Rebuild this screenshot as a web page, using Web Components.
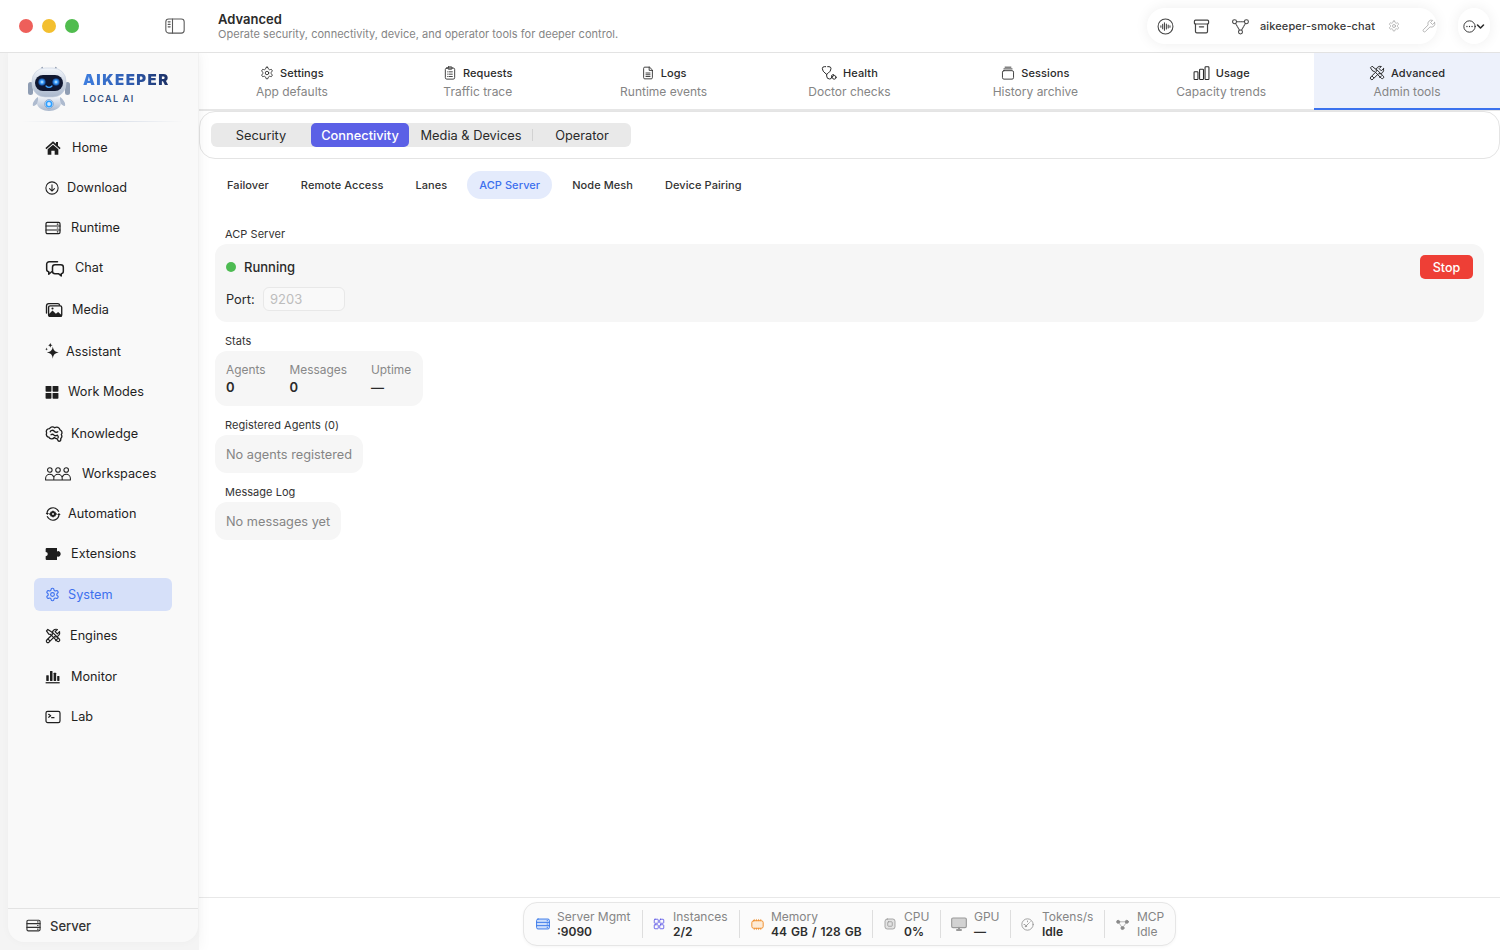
<!doctype html>
<html lang="en"><head><meta charset="utf-8"><title>Advanced</title>
<style>
html,body{margin:0;height:100%;overflow:hidden}
body{font-family:Inter,"Liberation Sans",sans-serif;color:#262626;background:#fff}
</style></head><body>

<app-shell>
  <top-bar slot="top" heading="Advanced" sub="Operate security, connectivity, device, and operator tools for deeper control."></top-bar>
  <side-bar slot="side">
    <nav-item label="Home" icon="home" iw="16" tx="27"></nav-item>
    <nav-item label="Download" icon="download" iw="14" tx="22"></nav-item>
    <nav-item label="Runtime" icon="runtime" iw="16" tx="26"></nav-item>
    <nav-item label="Chat" icon="chat" iw="20" tx="30"></nav-item>
    <nav-item label="Media" icon="media" iw="18" tx="27" style="--mt:9px"></nav-item>
    <nav-item label="Assistant" icon="spark" iw="15" tx="21" style="--mt:9px"></nav-item>
    <nav-item label="Work Modes" icon="grid" iw="14" tx="23"></nav-item>
    <nav-item label="Knowledge" icon="brain" iw="18" tx="26" style="--mt:9px"></nav-item>
    <nav-item label="Workspaces" icon="people" iw="26" ih="14" vb="0 0 26 14" sw="1.050" tx="37"></nav-item>
    <nav-item label="Automation" icon="auto" iw="16" tx="23"></nav-item>
    <nav-item label="Extensions" icon="puzzle" iw="16" tx="26"></nav-item>
    <nav-item label="System" icon="gear" iw="15" tx="23" active style="--mt:8px"></nav-item>
    <nav-item label="Engines" icon="tools" iw="16" tx="25" style="--mt:8px"></nav-item>
    <nav-item label="Monitor" icon="bars" iw="15" tx="26" style="--mt:8px"></nav-item>
    <nav-item label="Lab" icon="term" iw="16" tx="26"></nav-item>
  </side-bar>
  <main-tabs slot="main">
    <tab-item icon="gear" iw="14" label="Settings" sub="App defaults"></tab-item>
    <tab-item icon="clip" iw="14" label="Requests" sub="Traffic trace"></tab-item>
    <tab-item icon="doc" iw="14" label="Logs" sub="Runtime events"></tab-item>
    <tab-item icon="steth" iw="16" label="Health" sub="Doctor checks"></tab-item>
    <tab-item icon="sessions" iw="14" label="Sessions" sub="History archive"></tab-item>
    <tab-item icon="usage" iw="17" label="Usage" sub="Capacity trends"></tab-item>
    <tab-item icon="tools" iw="16" label="Advanced" sub="Admin tools" active></tab-item>
  </main-tabs>
  <seg-bar slot="main">
    <seg-item w="100">Security</seg-item>
    <seg-item w="98" active>Connectivity</seg-item>
    <seg-item w="124" sep>Media &amp; Devices</seg-item>
    <seg-item w="98">Operator</seg-item>
  </seg-bar>
  <sub-tabs slot="main">
    <sub-tab>Failover</sub-tab>
    <sub-tab>Remote Access</sub-tab>
    <sub-tab>Lanes</sub-tab>
    <sub-tab active>ACP Server</sub-tab>
    <sub-tab>Node Mesh</sub-tab>
    <sub-tab>Device Pairing</sub-tab>
  </sub-tabs>
  <page-content slot="main">
    <info-section heading="ACP Server" wide><server-card></server-card></info-section>
    <info-section heading="Stats">
      <stats-card>
        <stat-col label="Agents" value="0"></stat-col>
        <stat-col label="Messages" value="0"></stat-col>
        <stat-col label="Uptime" value="—"></stat-col>
      </stats-card>
    </info-section>
    <info-section heading="Registered Agents (0)"><empty-note>No agents registered</empty-note></info-section>
    <info-section heading="Message Log"><empty-note>No messages yet</empty-note></info-section>
  </page-content>
  <status-bar slot="main">
    <status-item icon="serverblue" label="Server Mgmt" value=":9090" iw="14" box="21" pad="0" w="106"></status-item>
    <status-item icon="gridline" label="Instances" value="2/2" iw="12" box="20" pad="10" w="97" sep></status-item>
    <status-item icon="chip" label="Memory" value="44 GB / 128 GB" iw="13" box="20" pad="11" w="133" sep></status-item>
    <status-item icon="cpu" label="CPU" value="0%" iw="12" box="20" pad="11" w="68" sep></status-item>
    <status-item icon="display" label="GPU" value="—" iw="16" box="23" pad="10" w="70" sep></status-item>
    <status-item icon="gauge" label="Tokens/s" value="Idle" iw="13" box="21" pad="10" w="94" sep></status-item>
    <status-item icon="nodesg" label="MCP" value="Idle" iw="13" box="21" pad="11" w="71" sep muted></status-item>
  </status-bar>
</app-shell>

<script>
const G='M12.22 2h-.44a2 2 0 0 0-2 2v.18a2 2 0 0 1-1 1.73l-.43.25a2 2 0 0 1-2 0l-.15-.08a2 2 0 0 0-2.73.73l-.22.38a2 2 0 0 0 .73 2.73l.15.1a2 2 0 0 1 1 1.72v.51a2 2 0 0 1-1 1.74l-.15.09a2 2 0 0 0-.73 2.73l.22.38a2 2 0 0 0 2.73.73l.15-.08a2 2 0 0 1 2 0l.43.25a2 2 0 0 1 1 1.73V20a2 2 0 0 0 2 2h.44a2 2 0 0 0 2-2v-.18a2 2 0 0 1 1-1.73l.43-.25a2 2 0 0 1 2 0l.15.08a2 2 0 0 0 2.73-.73l.22-.39a2 2 0 0 0-.73-2.73l-.15-.08a2 2 0 0 1-1-1.74v-.5a2 2 0 0 1 1-1.74l.15-.09a2 2 0 0 0 .73-2.73l-.22-.38a2 2 0 0 0-2.73-.73l-.15.08a2 2 0 0 1-2 0l-.43-.25a2 2 0 0 1-1-1.73V4a2 2 0 0 0-2-2z';
const ICONS={
 home:'<path fill="currentColor" stroke="none" d="M12 2 .6 12l1.500 1.700L12 5.100l9.900 8.600 1.500-1.700-3.900-3.400V3h-3v2.800z"/><path fill="currentColor" stroke="none" d="M12 7.200 4 14v8h5.500v-6h5v6H20v-8z"/>',
 download:'<circle cx="12" cy="12" r="10.500"/><path d="M12 6.500v10.500M7.800 13l4.200 4.200 4.200-4.200"/>',
 runtime:'<rect x="1.500" y="3.500" width="21" height="17" rx="2"/><path d="M1.500 9h21M1.500 15h21M18.500 6.200h.8M18.500 12h.8M18.500 17.800h.8"/>',
 chat:'<path d="M15 4.500H5A3 3 0 0 0 2 7.500v6a3 3 0 0 0 2.500 3v3l3.500-3"/><path d="M15.500 8h3.500a3 3 0 0 1 3 3v5a3 3 0 0 1-2.500 3v2.500l-3-2.500h-4.500a3 3 0 0 1-3-3v-5a3 3 0 0 1 3-3z"/>',
 media:'<path d="M2 16V6.500a3 3 0 0 1 3-3h12a2.500 2.500 0 0 1 2.500 2"/><rect x="4.800" y="6.500" width="17.500" height="14" rx="2"/><path fill="currentColor" stroke="none" d="M5 20.500v-3l5-5 4.500 4.500 3-2.500 4.500 4v2z"/><circle cx="10" cy="10" r="1.400" fill="currentColor" stroke="none"/>',
 spark:'<path fill="currentColor" stroke="none" d="M12.500 4c1 6.200 2.800 8.200 9.500 9.500-6.700 1.300-8.500 3.300-9.500 10-1-6.700-2.800-8.700-9.500-10 6.700-1.300 8.500-3.300 9.500-9.500zM8.500-2c.5 2.700 1.300 3.500 3.800 4-2.500.5-3.300 1.300-3.800 4-.5-2.700-1.300-3.500-3.800-4 2.500-.5 3.300-1.300 3.800-4zM2.500 5.500c.3 1.800.8 2.300 2.500 2.600-1.700.3-2.200.8-2.500 2.600-.3-1.800-.8-2.300-2.500-2.600 1.700-.3 2.200-.8 2.500-2.600z"/>',
 grid:'<g fill="currentColor" stroke="none"><rect x="1" y="1.500" width="10" height="10" rx="1.200"/><rect x="13" y="1.500" width="10" height="10" rx="1.200"/><rect x="1" y="13.500" width="10" height="10" rx="1.200"/><rect x="13" y="13.500" width="10" height="10" rx="1.200"/></g>',
 brain:'<path d="M5.500 16.500A4 4 0 0 1 2.200 10.700 4 4 0 0 1 6 4.800 4.500 4.500 0 0 1 13 3.700a4.500 4.500 0 0 1 7 2.800 4 4 0 0 1 1.700 6.400 3.500 3.500 0 0 1-.7 5.100v1.800a2 2 0 0 1-3.500 1.200l-1.500-2.800a4 4 0 0 1-3.500-1.500 4.500 4.500 0 0 1-7.500-.5z"/><path d="M7 9a3 3 0 0 1 5-1M12 8c1.500 2 4 2 5 1M8 13c1.500-1 3-.5 4 .5s3 1 4.500 0M16.500 13.500c1 1 1.500 2 1 3.500"/>',
 people:'<circle cx="4.800" cy="3" r="2.300"/><circle cx="13" cy="3" r="2.300"/><circle cx="21.200" cy="3" r="2.300"/><path d="M.6 13v-1.500a4.200 4.200 0 0 1 4.200-4.200c1.800 0 3.300 1.100 3.900 2.700M8.800 13v-1.500a4.200 4.200 0 0 1 8.400 0V13M17.300 10c.6-1.600 2.100-2.700 3.900-2.700a4.200 4.200 0 0 1 4.200 4.200V13M.6 13h24.800"/>',
 auto:'<circle cx="12" cy="12" r="2.600" stroke-width="2.400"/><path d="M12 7.800l1 1.500 1.800-.3.6 1.800 1.600 1.200-1.600 1.200-.6 1.800-1.800-.3-1 1.500-1-1.500-1.800.3-.6-1.800L7 12l1.600-1.200.6-1.800 1.800.3z"/><path d="M3 11a9 9 0 0 1 15.500-5.500L20.500 8M21 13a9 9 0 0 1-15.500 5.500L3.500 16"/><path fill="currentColor" stroke="none" d="M1 10.500h5l-2.500 3zM18 13.500h5.500l-2.500-3z"/>',
 puzzle:'<path fill="currentColor" stroke="none" d="M2.500 3h15.500v5.500a2.300 2.300 0 0 1 3-.6c1.300.8 2.500 2.300 2.500 4s-1.200 3.200-2.500 4a2.300 2.300 0 0 1-3-.6V21H2.500a1.500 1.500 0 0 1-1.500-1.500v-4.200a2.800 2.800 0 0 0 0-6.300V4.500A1.500 1.500 0 0 1 2.500 3z"/>',
 gear:`<path d="${G}"/><circle cx="12" cy="12" r="3"/>`,
 tools:'<path d="M4.200 2.200 2.200 4.200l3.500 5 2.500.3L18.500 20a2.300 2.300 0 0 0 3.200-3.200L11.200 6.600 9.500 5.700z"/><path d="M16 19l3-3"/><path d="M21.800 5.500l-3.300 3.300-3.300-3.300 3.300-3.300a6 6 0 0 0-7.500 7.500L2.700 18a2.400 2.400 0 0 0 0 3.300 2.400 2.400 0 0 0 3.300 0l8.300-8.300a6 6 0 0 0 7.500-7.500z"/><path d="M5 17l2 2"/>',
 bars:'<g fill="currentColor" stroke="none"><rect x="2" y="10" width="4" height="9" rx=".6"/><rect x="8" y="3" width="4" height="16" rx=".6"/><rect x="13.800" y="6" width="4" height="13" rx=".6"/><rect x="19.500" y="11" width="3.600" height="8" rx=".6"/><rect x="1" y="21" width="22.500" height="2"/></g>',
 term:'<rect x="1.500" y="3.500" width="21" height="17" rx="2.500"/><path d="M5.500 8l3 2.200-3 2.200M10 13h3.500"/>',
 clip:'<rect x="4" y="3.500" width="16" height="19" rx="2.500"/><rect x="8.500" y="1.500" width="7" height="4" rx="1"/><path d="M8 10h.8M11 10h5M8 14h.8M11 14h5M8 18h.8M11 18h5"/>',
 doc:'<path d="M14 2H6.500A2 2 0 0 0 4.500 4v16a2 2 0 0 0 2 2h11a2 2 0 0 0 2-2V7.500z"/><path d="M14 2v5.500h5.500M8.500 12h7M8.500 15h7M8.500 18h7"/>',
 steth:'<path d="M7 2.500H5a3 3 0 0 0-3 3 9 9 0 0 0 4 6.500l2.500 2 2.500-2a9 9 0 0 0 4-6.500 3 3 0 0 0-3-3h-2"/><path d="M8.500 14v2.500a4.500 4.500 0 0 0 4.500 4.500 3 3 0 0 0 3-3v-2.500a3 3 0 0 1 3-1"/><circle cx="19.800" cy="18.500" r="2.800"/>',
 sessions:'<rect x="2.500" y="8" width="19" height="14.500" rx="2.500"/><path d="M5 5h14M7 2h10"/>',
 usage:'<rect x="1.500" y="9.500" width="5.500" height="11" rx="1"/><rect x="9.300" y="6" width="5.500" height="14.500" rx="1"/><rect x="17" y="2.500" width="5.500" height="18" rx="1"/>',
 wave:'<circle cx="12" cy="12" r="10.500"/><path d="M5.500 11v2M8 9v6M10.500 6.800v10.400M13.200 8.500v7M15.800 9.800v4.400M18.300 11v2" stroke-width="1.500"/>',
 archive:'<rect x="2" y="3" width="20" height="5.500" rx="1.500"/><path d="M3.500 8.500V19a2 2 0 0 0 2 2h13a2 2 0 0 0 2-2V8.500M9 12.500h6"/>',
 nodes:'<circle cx="4.500" cy="6" r="2.500"/><circle cx="19.500" cy="6" r="2.500"/><circle cx="12" cy="19" r="2.500"/><path d="M7.500 6h9M5.800 8.300l5 8.300M18.200 8.300l-5 8.300" stroke-dasharray="1.500 1"/>',
 wrench:'<path d="M21.800 6l-3.800 3.500-3.400-3.400 3.700-3.700a6 6 0 0 0-7.800 7.800L2.300 18.500a2.300 2.300 0 0 0 3.200 3.200l8.300-8.200A6 6 0 0 0 21.800 6z"/>',
 dots:'<circle cx="12" cy="12" r="10.500"/><path d="M7.300 12h.01M12 12h.01M16.700 12h.01" stroke-width="2.400" stroke-linecap="round"/>',
 chev:'<path d="M4 8l8 8 8-8" stroke-width="4.200" stroke-linecap="round"/>',
 sidebar:'<rect x="1" y="3.500" width="22" height="17" rx="3.500"/><path d="M9 3.500v17"/><path d="M3.800 7h2.400M3.800 10h2.400M3.800 13h2.400" stroke-width="1.400"/>',
 serverblue:'<rect x="1" y="3.500" width="22" height="17" rx="2.500" fill="#cfdffb"/><path d="M1 9.200h22M1 14.800h22M19 6.300h.8M19 12h.8M19 17.700h.8"/>',
 gridline:'<rect x="2.500" y="2.500" width="8" height="8" rx="1.500"/><rect x="13.500" y="2.500" width="8" height="8" rx="1.500"/><rect x="2.500" y="13.500" width="8" height="8" rx="1.500"/><rect x="13.500" y="13.500" width="8" height="8" rx="1.500"/>',
 chip:'<rect x="1.500" y="5" width="21" height="14" rx="3.500" fill="#fdebd6"/><path d="M6 2.500V5M10 2.500V5M14 2.500V5M18 2.500V5M6 19v2.500M10 19v2.500M14 19v2.500M18 19v2.500" stroke-width="1.200"/>',
 cpu:'<rect x="2" y="2" width="20" height="20" rx="4.500" fill="#e3e3e3"/><rect x="7.500" y="7.500" width="9" height="9" rx="1.500"/>',
 display:'<rect x="1" y="3" width="22" height="14.500" rx="2" fill="#d2d2d2"/><path d="M9 21h6M12 17.500V21" stroke-width="3"/>',
 gauge:'<circle cx="12" cy="12" r="10.500"/><path d="M8 16l6-6M5.500 12h1.500M12 5.500V7M17 7l-1 1"/><circle cx="9" cy="15" r="1.300" fill="currentColor"/>',
 nodesg:'<circle cx="4" cy="7" r="2.800" fill="currentColor"/><circle cx="20" cy="7" r="2.800" fill="currentColor"/><circle cx="12" cy="18.500" r="2.800" fill="currentColor"/><path d="M4 7h16M4 7l8 11.500L20 7" stroke-width="1.100"/>'
};
const def=(name,css,html,extra={})=>{
  const t=document.createElement('template');
  t.innerHTML=`<style>${css}</style>${html}`;
  customElements.define(name,class extends HTMLElement{
    constructor(){super();this.attachShadow({mode:'open'}).appendChild(t.content.cloneNode(true))}
    connectedCallback(){extra.init&&extra.init.call(this,this.shadowRoot)}
  });
};
customElements.define('ui-icon',class extends HTMLElement{
  constructor(){super();this.attachShadow({mode:'open'})}
  connectedCallback(){
    const w=this.getAttribute('w')||14,h=this.getAttribute('h')||w,n=this.getAttribute('name');
    this.shadowRoot.innerHTML=`<style>:host{display:inline-flex;flex:none;line-height:0}svg{display:block;overflow:visible}</style>
    <svg width="${w}" height="${h}" viewBox="${this.getAttribute('vb')||'0 0 24 24'}" fill="none" stroke="currentColor" stroke-width="${this.getAttribute('sw')||1.8}" stroke-linecap="round" stroke-linejoin="round" aria-hidden="true">${ICONS[n]||''}</svg>`;
  }
});
const mkIcon=(name,w,sw,h,vb)=>{const i=document.createElement('ui-icon');i.setAttribute('name',name);i.setAttribute('w',w);if(sw)i.setAttribute('sw',sw);if(h)i.setAttribute('h',h);if(vb)i.setAttribute('vb',vb);return i};

def('app-shell',`:host{display:grid;grid-template-rows:53px 1fr;grid-template-columns:199px 1fr;height:950px;width:1500px;overflow:hidden;background:#fff}
  .top{grid-column:1/3}
  .side{background:#f4f4f4;padding:0 1px 8px 8px;min-height:0;display:flex;position:relative;z-index:1;box-shadow:0 0 14px rgba(0,0,0,.05);clip-path:inset(0 -20px 0 0)}
  .main{display:flex;flex-direction:column;min-width:0;min-height:0}`,
  `<div class="top"><slot name="top"></slot></div><div class="side"><slot name="side"></slot></div><div class="main"><slot name="main"></slot></div>`);

def('top-bar',`:host{display:flex;align-items:center;height:53px;box-sizing:border-box;border-bottom:1px solid #e3e3e3;background:#fff}
  .lights{display:flex;gap:9px;padding-left:19px;width:165px;box-sizing:border-box;flex:none}
  .lights i{width:14px;height:14px;border-radius:50%;display:block}
  .tog{flex:none;width:53px;color:#5a5a5a;display:flex}
  .tt{flex:1;min-width:0}
  h1{margin:0;font-size:13px;line-height:16px;font-weight:600;color:#2a2a2a}
  p{margin:0;font-size:11px;line-height:14px;color:#858585;letter-spacing:.03px}
  .pill{display:flex;align-items:center;height:36px;background:#fff;border-radius:18px;box-shadow:0 0 14px rgba(0,0,0,.07);color:#444}
  .a{width:290px;margin-right:21px;box-sizing:border-box;padding-left:10px}
  .b{width:32px;margin-right:10px;justify-content:center;color:#2a2a2a}
  .name{font-size:11px;font-weight:500;color:#3a3a3a;margin:0 0 0 10px;width:128px;white-space:nowrap;letter-spacing:.12px}
  ui-icon.g{color:#a8a8a8}`,
  `<div class="lights"><i style="background:#ee5f5a"></i><i style="background:#f3bf2f"></i><i style="background:#50bc4e"></i></div>
   <div class="tog"><ui-icon name="sidebar" w="20" h="20" sw="1.300"></ui-icon></div>
   <div class="tt"><h1></h1><p></p></div>
   <div class="pill a"><ui-icon name="wave" w="17" sw="1.500"></ui-icon><span style="width:19px"></span><ui-icon name="archive" w="17" sw="1.700"></ui-icon><span style="width:21px"></span><ui-icon name="nodes" w="19" sw="1.300"></ui-icon><span class="name">aikeeper-smoke-chat</span><ui-icon class="g" name="gear" w="12" sw="1.600"></ui-icon><span style="width:22px"></span><ui-icon class="g" name="wrench" w="14" sw="1.400"></ui-icon></div>
   <div class="pill b"><ui-icon name="dots" w="13" sw="1.700"></ui-icon><ui-icon name="chev" w="9"></ui-icon></div>`,
  {init(r){r.querySelector('h1').textContent=this.getAttribute('heading');r.querySelector('p').textContent=this.getAttribute('sub')}});

def('side-bar',`:host{display:flex;flex-direction:column;width:190px;background:#f9f9f9;border-radius:0 0 16px 16px;box-shadow:0 0 8px rgba(0,0,0,.03);min-height:0}
  .brand{display:flex;align-items:center;height:69px;box-sizing:border-box;padding:1px 0 0 19px;gap:12px;position:relative;flex:none}
  .brand::after{content:"";position:absolute;left:14px;right:14px;bottom:0;height:1px;background:linear-gradient(90deg,transparent,#d4dbe6 50%,transparent)}
  .nm{font-size:15px;line-height:18px;font-weight:900;letter-spacing:1.450px;background:linear-gradient(90deg,#3f7fe0,#2f5cb0 55%,#1b2f63);-webkit-background-clip:text;background-clip:text;color:transparent}
  .lo{font-size:9px;line-height:12px;margin-top:4px;font-weight:600;letter-spacing:1.300px;color:#33507f}
  nav{display:flex;flex-direction:column;flex:1;padding:2px 0 0 26px;min-height:0}
  .foot{flex:none;height:33px;border-top:1px solid #e3e3e3;display:flex;align-items:center;padding-left:18px;gap:9px;font-size:13px;font-weight:500;color:#333}`,
  `<div class="brand"><svg width="44" height="46" viewBox="0 0 44 46" aria-hidden="true" style="flex:none">
     <defs><linearGradient id="m" x1="0" y1="0" x2="0" y2="1"><stop offset="0" stop-color="#f3f6fb"/><stop offset="1" stop-color="#a9b7cc"/></linearGradient>
     <radialGradient id="e"><stop offset="0" stop-color="#e4f6ff"/><stop offset=".45" stop-color="#3ea2ff"/><stop offset="1" stop-color="#0c3a86"/></radialGradient></defs>
     <path d="M15 2l1 5h12l1-5" fill="none" stroke="#8d99ad" stroke-width="1.500"/>
     <rect x="1" y="17" width="5" height="13" rx="2.500" fill="#8f9db3"/><rect x="38" y="17" width="5" height="13" rx="2.500" fill="#8f9db3"/>
     <path d="M11 32c-3 2-6 6-5 9 2 0 4-2 6-4zM33 32c3 2 6 6 5 9-2 0-4-2-6-4z" fill="#aebbcf"/>
     <path d="M12 31h20l2 8c-1 4-6 7-12 7s-11-3-12-7z" fill="url(#m)"/>
     <rect x="5" y="3" width="34" height="29" rx="13" fill="url(#m)" stroke="#c4cedd" stroke-width=".6"/>
     <rect x="8" y="10" width="28" height="16" rx="8" fill="#0f1730"/>
     <circle cx="15" cy="17" r="3.800" fill="url(#e)"/><circle cx="29" cy="17" r="3.800" fill="url(#e)"/>
     <path d="M19 21c1.500 1.800 4.500 1.800 6 0" fill="none" stroke="#3ea2ff" stroke-width="1.200" stroke-linecap="round"/>
     <circle cx="22" cy="39" r="4.400" fill="#cfe6ff" stroke="#8aa0bf" stroke-width=".8"/><circle cx="22" cy="39" r="2.700" fill="none" stroke="#2ea0ff" stroke-width="1.600"/>
   </svg><div><div class="nm">AIKEEPER</div><div class="lo">LOCAL AI</div></div></div>
   <nav><slot></slot></nav>
   <div class="foot"><ui-icon name="runtime" w="15" sw="1.800"></ui-icon><span>Server</span></div>`);

def('nav-item',`:host{display:flex;align-items:center;height:33px;margin-top:var(--mt,7px);width:138px;box-sizing:border-box;padding-left:11px;font-size:12.700px;color:#1f1f1f;border-radius:6px;flex:none}
  :host([active]){background:#d6e0f9;color:#3d70ee}
  .i{flex:none;display:flex}span{white-space:nowrap}`,
  `<div class="i"></div><span></span>`,
  {init(r){const d=r.querySelector('.i');d.style.width=this.getAttribute('tx')+'px';
    d.appendChild(mkIcon(this.getAttribute('icon'),this.getAttribute('iw'),this.getAttribute('sw'),this.getAttribute('ih'),this.getAttribute('vb')));
    r.querySelector('span').textContent=this.getAttribute('label')}});

def('main-tabs',`:host{display:grid;grid-template-columns:repeat(7,1fr);height:58px;box-sizing:border-box;border-bottom:2px solid #e6e6e6;flex:none}`,`<slot></slot>`);
def('tab-item',`:host{display:flex;flex-direction:column;align-items:center;height:56px;box-sizing:border-box;padding-top:12px}
  :host([active]){background:#edf1fb;height:57px;border-bottom:2px solid #3b72ee}
  .l{display:flex;align-items:center;gap:6px;font-size:11px;line-height:16px;font-weight:500;color:#2a2a2a;letter-spacing:.1px}
  .s{font-size:12px;line-height:15px;margin-top:3px;color:#858585;white-space:nowrap}`,
  `<div class="l"><span class="ic" style="display:flex;height:16px;align-items:center"></span><span class="tx"></span></div><div class="s"></div>`,
  {init(r){r.querySelector('.ic').appendChild(mkIcon(this.getAttribute('icon'),this.getAttribute('iw'),'1.500'));
    r.querySelector('.tx').textContent=this.getAttribute('label');r.querySelector('.s').textContent=this.getAttribute('sub')}});

def('seg-bar',`:host{display:block;flex:none;height:48px;box-sizing:border-box;border:1px solid #e4e4e4;border-radius:16px;padding:11px 11px}
  .t{display:inline-flex;height:24px;background:#e9e9e9;border-radius:6px}`,`<div class="t"><slot></slot></div>`);
def('seg-item',`:host{display:flex;align-items:center;justify-content:center;height:24px;font-size:12.800px;color:#2a2a2a;border-radius:5px;position:relative;white-space:nowrap}
  :host([active]){background:#5b60e6;color:#fff;font-weight:500}
  :host([sep])::after{content:"";position:absolute;right:0;top:6px;bottom:6px;width:1px;background:#d2d2d2}`,`<slot></slot>`,
  {init(){this.style.width=this.getAttribute('w')+'px'}});

def('sub-tabs',`:host{display:flex;gap:8px;flex:none;padding:12px 0 0 16px}`,`<slot></slot>`);
def('sub-tab',`:host{display:flex;align-items:center;height:28px;padding:0 12px;font-size:11px;font-weight:500;color:#333;border-radius:14px;white-space:nowrap;letter-spacing:.07px}
  :host([active]){background:#e4ebfc;color:#3d70ee}`,`<slot></slot>`);

def('page-content',`:host{display:flex;flex-direction:column;gap:12px;flex:1;min-height:0;padding:28px 16px 0 16px;box-sizing:border-box}`,`<slot></slot>`);
def('info-section',`:host{display:flex;flex-direction:column;align-items:flex-start}
  :host([wide]){align-items:stretch}
  h2{margin:0 0 2px 10px;font-size:11px;line-height:15px;font-weight:400;color:#333;letter-spacing:.04px}`,`<h2></h2><slot></slot>`,
  {init(r){r.querySelector('h2').textContent=this.getAttribute('heading')}});
def('server-card',`:host{display:flex;flex-direction:column;gap:8px;background:#f6f6f6;border-radius:12px;padding:11px}
  .r{display:flex;align-items:center;height:24px}
  .dot{width:10px;height:10px;border-radius:50%;background:#4dbb52;margin-right:8px}
  .st{font-size:13px;font-weight:500;color:#2a2a2a;flex:1}
  button{all:unset;display:flex;align-items:center;justify-content:center;width:53px;height:24px;background:#ee3f36;color:#fff;border-radius:5px;font-size:12.500px;font-weight:500}
  .p{font-size:12.800px;color:#2a2a2a;width:37px}
  .in{box-sizing:border-box;width:82px;height:24px;border:1px solid #e8e8e8;border-radius:6px;background:#f9f9f9;color:#bdbdbd;font-size:13px;line-height:22px;padding-left:6px}`,
  `<div class="r"><span class="dot"></span><span class="st">Running</span><button>Stop</button></div><div class="r"><span class="p">Port:</span><div class="in">9203</div></div>`);
def('stats-card',`:host{display:flex;gap:24px;height:55px;box-sizing:border-box;background:#f6f6f6;border-radius:12px;padding:10px 11px;width:208px}`,`<slot></slot>`);
def('stat-col',`:host{display:block}.a{font-size:11.900px;line-height:17px;color:#888}.b{font-size:13px;line-height:18px;font-weight:600;color:#2a2a2a}`,
  `<div class="a"></div><div class="b"></div>`,{init(r){r.querySelector('.a').textContent=this.getAttribute('label');r.querySelector('.b').textContent=this.getAttribute('value')}});
def('empty-note',`:host{display:flex;align-items:center;height:38px;padding:0 11px;background:#f6f6f6;border-radius:12px;font-size:12.750px;color:#858585}`,`<slot></slot>`);

def('status-bar',`:host{display:flex;justify-content:center;flex:none;height:53px;box-sizing:border-box;border-top:1px solid #e8e8e8;padding-top:4px}
  .p{display:flex;align-items:center;height:44px;box-sizing:border-box;background:#fbfbfb;border:1px solid #e6e6e6;border-radius:14px;padding:0 0 0 12px;width:653px;box-shadow:0 1px 3px rgba(0,0,0,.04)}`,`<div class="p"><slot></slot></div>`);
def('status-item',`:host{display:flex;align-items:center;height:28px;box-sizing:border-box;flex:none}
  :host([sep]){border-left:1px solid #dedede}
  .ic{flex:none;display:flex}
  .a{font-size:12px;line-height:15px;color:#858585;white-space:nowrap}.b{font-size:12px;line-height:15px;font-weight:600;color:#2e2e2e;white-space:nowrap;word-spacing:1px}
  :host([muted]) .b{font-weight:400;color:#858585}`,
  `<div class="ic"></div><div><div class="a"></div><div class="b"></div></div>`,
  {init(r){const n=this.getAttribute('icon'),c={serverblue:'#3e7bea',gridline:'#5b55e6',chip:'#f08a24',cpu:'#9a9a9a',display:'#9a9a9a',gauge:'#9a9a9a',nodesg:'#8a8a8a'}[n];
    const ic=mkIcon(n,this.getAttribute('iw'),'1.700');ic.style.color=c;const b=r.querySelector('.ic');b.appendChild(ic);
    b.style.width=this.getAttribute('box')+'px';
    r.querySelector('.a').textContent=this.getAttribute('label');r.querySelector('.b').textContent=this.getAttribute('value');
    this.style.width=this.getAttribute('w')+'px';this.style.paddingLeft=this.getAttribute('pad')+'px'}});
</script>
</body></html>
